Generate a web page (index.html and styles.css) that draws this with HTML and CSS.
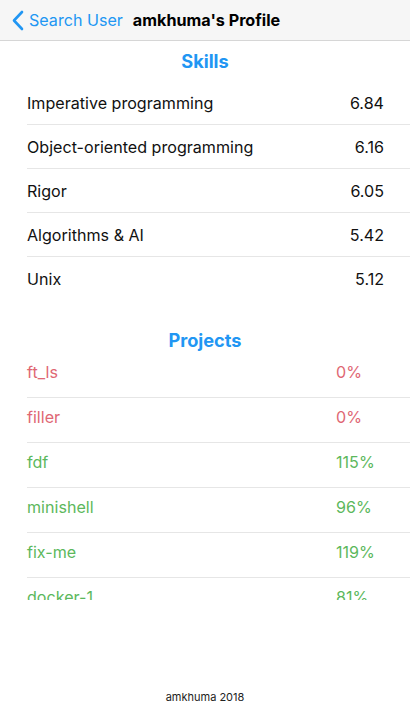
FILE: index.html
```html
<!DOCTYPE html>
<html>
<head>
<meta charset="utf-8">
<link rel="stylesheet" href="styles.css">
</head>
<body>
<div class="page">
  <header class="nav">
    <a class="back">
      <svg class="chev" width="13" height="21" viewBox="0 0 13 21"><path d="M11 2 L3 10.5 L11 19" fill="none" stroke="#2196f3" stroke-width="2.6" stroke-linecap="round" stroke-linejoin="round"/></svg>
      <span class="back-label">Search User</span>
    </a>
    <span class="title">amkhuma's Profile</span>
  </header>

  <h2 class="section-title">Skills</h2>
  <ul class="skills">
    <li class="row"><span>Imperative programming</span><span class="val">6.84</span></li>
    <li class="row"><span>Object-oriented programming</span><span class="val">6.16</span></li>
    <li class="row"><span>Rigor</span><span class="val">6.05</span></li>
    <li class="row"><span>Algorithms &amp; AI</span><span class="val">5.42</span></li>
    <li class="row"><span>Unix</span><span class="val">5.12</span></li>
  </ul>

  <h2 class="section-title projects-title">Projects</h2>
  <ul class="projects">
    <li class="prow fail"><span>ft_ls</span><span>0%</span></li>
    <li class="prow fail"><span>filler</span><span>0%</span></li>
    <li class="prow ok"><span>fdf</span><span>115%</span></li>
    <li class="prow ok"><span>minishell</span><span>96%</span></li>
    <li class="prow ok"><span>fix-me</span><span>119%</span></li>
    <li class="prow ok"><span>docker-1</span><span>81%</span></li>
  </ul>

  <div class="spacer"></div>
  <footer class="footer">amkhuma 2018</footer>
</div>
</body>
</html>
```

FILE: styles.css
```css
* { box-sizing: border-box; }
html, body { margin: 0; padding: 0; background: #fff; }
body {
  font-family: Inter, "Liberation Sans", sans-serif;
  color: #111;
}
.page {
  height: 710px;
  display: flex;
  flex-direction: column;
  overflow: hidden;
}
.nav {
  height: 41px;
  flex: none;
  background: #f6f6f6;
  border-bottom: 1px solid #d6d6d6;
  display: flex;
  align-items: center;
  padding-left: 11px;
}
.back {
  display: flex;
  align-items: center;
  color: #2196f3;
  font-size: 16.1px;
  margin-right: 10px;
}
.chev { display: block; margin-right: 5px; }
.title {
  font-size: 16.2px;
  font-weight: 700;
  color: #000;
}
.section-title {
  margin: 0;
  height: 40px;
  line-height: 40px;
  text-align: center;
  font-size: 18.2px;
  font-weight: 700;
  color: #2196f3;
  flex: none;
}
.skills, .projects {
  list-style: none;
  margin: 0;
  padding: 0 0 0 27px;
  flex: none;
}
.row {
  height: 44px;
  display: flex;
  align-items: center;
  justify-content: space-between;
  padding-right: 26px;
  border-bottom: 1px solid #e6e6e6;
  font-size: 16.1px;
  color: #111;
}
.row:last-child { border-bottom: none; }
.projects-title {
  margin-top: 26px;
  height: 26px;
  line-height: 26px;
}
.projects {
  height: 247px;
  overflow: hidden;
}
.prow {
  height: 45px;
  display: grid;
  grid-template-columns: 1fr 74px;
  padding-top: 9px;
  line-height: 20px;
  font-size: 16.1px;
  border-bottom: 1px solid #e6e6e6;
}
.fail { color: #e06774; }
.ok { color: #5cb85c; }
.spacer { flex: 1; }
.footer {
  flex: none;
  text-align: center;
  font-size: 11px;
  line-height: 14px;
  color: #222;
  padding-bottom: 6px;
}
```
